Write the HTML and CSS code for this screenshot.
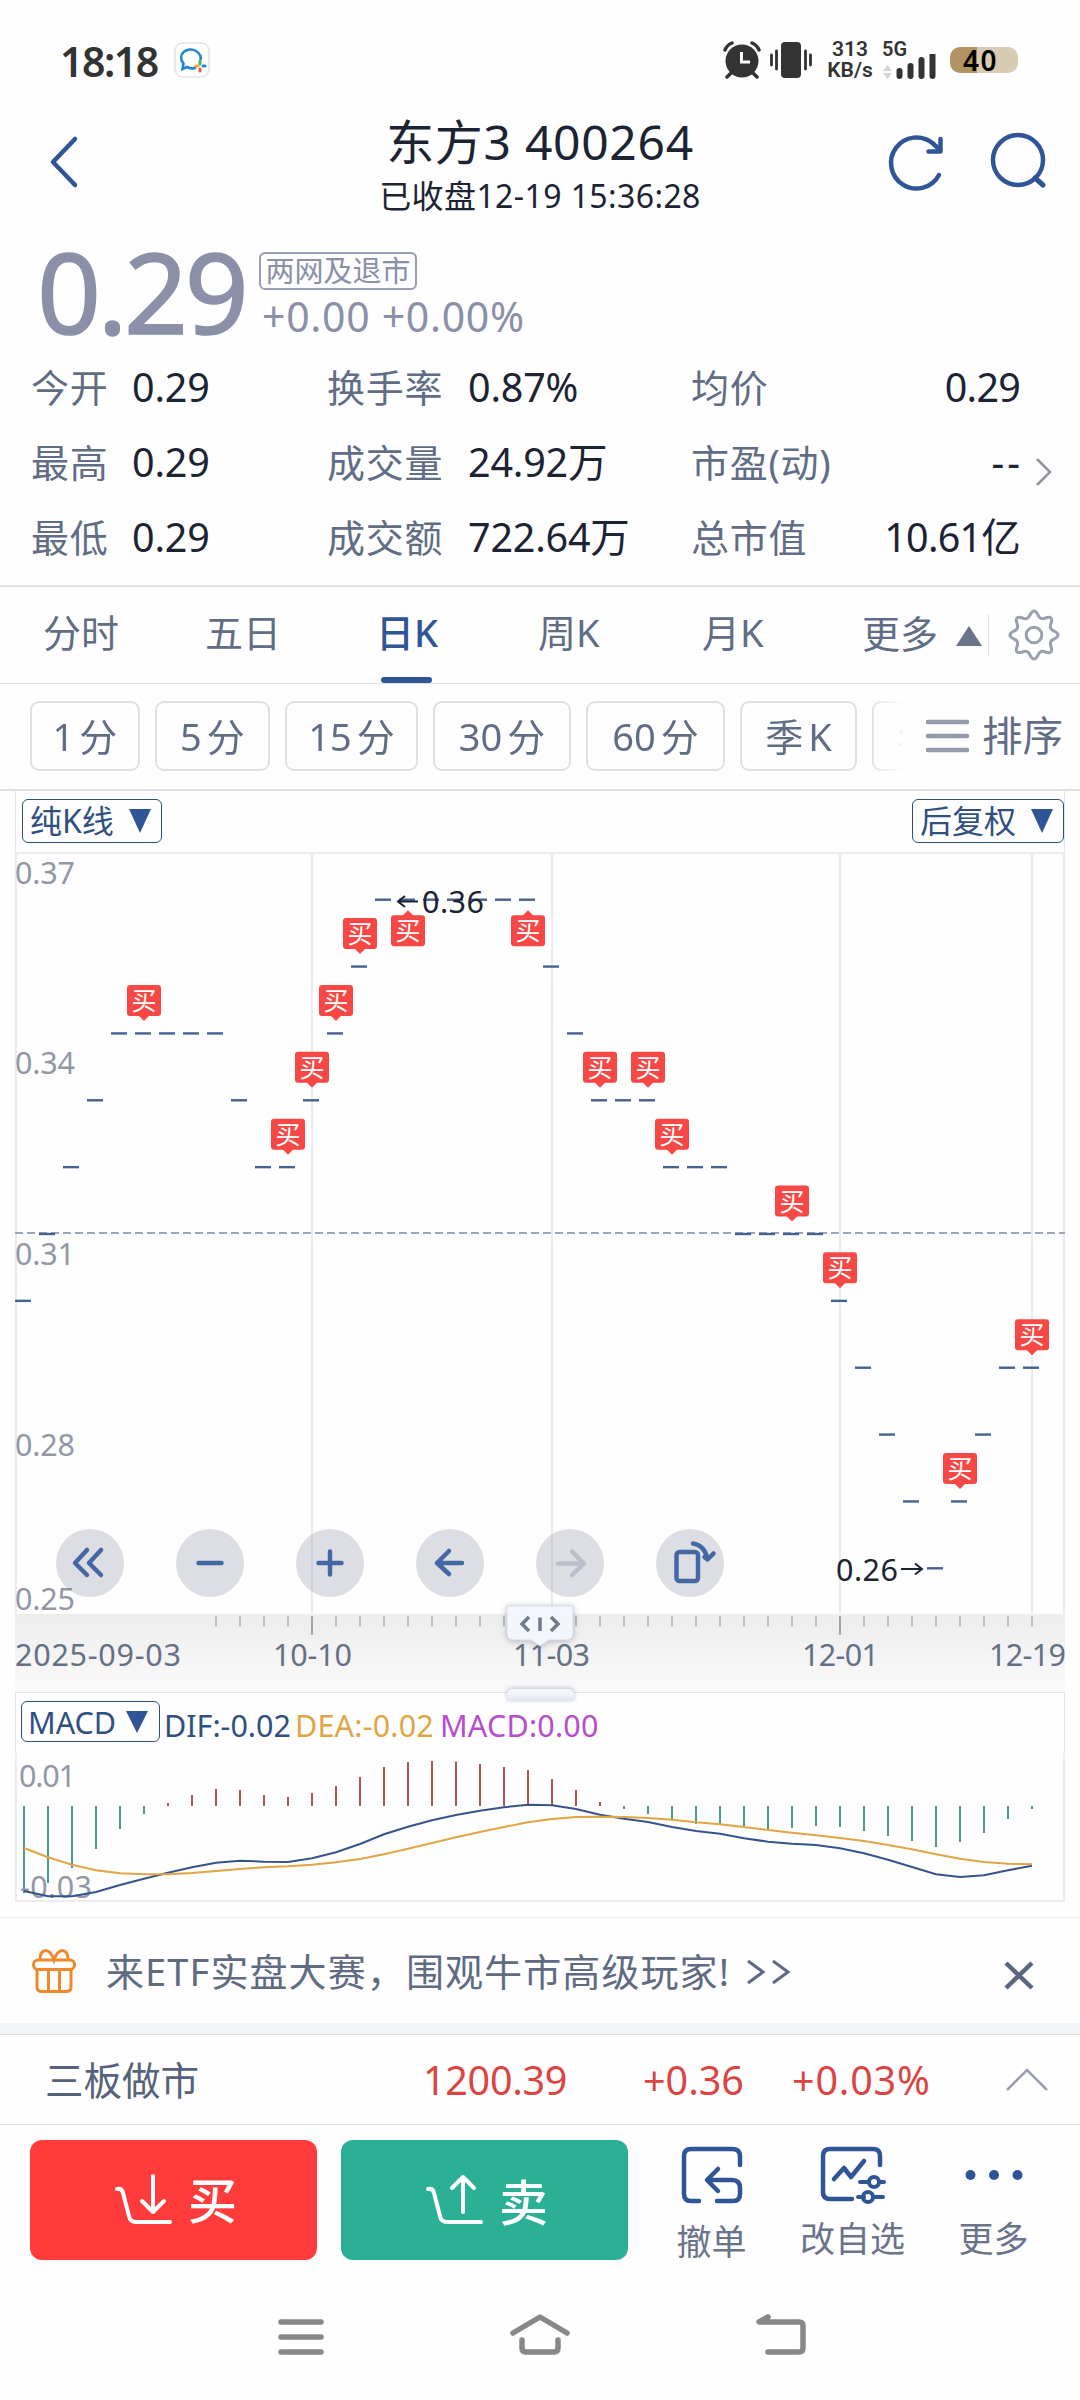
FILE: index.html
```html
<!DOCTYPE html>
<html lang="zh-CN">
<head>
    <meta charset="UTF-8">
    <meta name="viewport" content="width=device-width, initial-scale=1.0">
    <title>东方3 400264</title>
    <link rel="stylesheet" href="styles.css">
</head>
<body>
    <div class="status-bar">
        <span class="clock">18:18</span>
        <svg class="app-icon" width="36" height="36" viewBox="0 0 36 36">
            <rect x="1" y="1" width="34" height="34" rx="8" fill="#fff" stroke="#e3e5e8" stroke-width="1.5"/>
            <path d="M22 25.500 C18 27.500 13 25 13 25 L8.500 27 L9.500 21.500 C2 12 14 4 22 9 Q28 13 26.500 18" fill="none" stroke="#1f86d8" stroke-width="2.600"/>
            <path d="M26 19 v3" stroke="#4ab648" stroke-width="3" stroke-linecap="round"/>
            <path d="M22 24 h2" stroke="#f7a823" stroke-width="3" stroke-linecap="round"/>
            <path d="M29 24 h2" stroke="#1f86d8" stroke-width="3" stroke-linecap="round"/>
            <path d="M26 27 v2" stroke="#ee5b36" stroke-width="3" stroke-linecap="round"/>
        </svg>
        <div class="status-right">
            <svg width="38" height="38" viewBox="0 0 38 38">
                <circle cx="19" cy="20" r="16.500" fill="#333"/>
                <path d="M2 9 Q4 4 9 2 M36 9 Q34 4 29 2 M8 32 L4 36 M30 32 L34 36" fill="none" stroke="#333" stroke-width="3.500" stroke-linecap="round"/>
                <path d="M18.500 11 V21 H27" fill="none" stroke="#fff" stroke-width="3"/>
            </svg>
            <svg class="vibrate" width="44" height="38" viewBox="0 0 44 38">
                <rect x="12" y="1" width="20" height="36" rx="4" fill="#333"/>
                <path d="M2.500 14 V24 M7.500 10 V28 M36.500 10 V28 M41.500 14 V24" stroke="#333" stroke-width="2.800" stroke-linecap="round"/>
            </svg>
            <div class="speed"><span>313</span><span>KB/s</span></div>
            <div class="signal">
                <span>5G</span>
                <svg width="56" height="25" viewBox="0 0 56 25">
                    <path d="M1 17 L5.500 11 L10 17 Z M1 19 L5.500 25 L10 19 Z" fill="#d2d2d2"/>
                    <path d="M17.500 17 V22 M28.500 12 V22 M39.500 6 V22 M50.500 1 V22" stroke="#333" stroke-width="6" stroke-linecap="round"/>
                </svg>
            </div>
            <div class="battery">40</div>
        </div>
    </div>

    <header class="header">
        <svg class="back" width="32" height="54" viewBox="0 0 32 54"><path d="M27 4 L5 27 L27 50" fill="none" stroke="#2f5597" stroke-width="4.500" stroke-linecap="round" stroke-linejoin="round"/></svg>
        <div class="title">
            <h1>东方3 400264</h1>
            <p>已收盘12-19 15:36:28</p>
        </div>
        <div class="header-icons">
            <svg width="60" height="62" viewBox="0 0 60 62">
                <path d="M52 44 A25.500 25.500 0 1 1 46 12.500 L53 19" fill="none" stroke="#2f5597" stroke-width="4.500" stroke-linecap="round"/>
                <path d="M53.500 8 V20.500 H41.500" fill="none" stroke="#2f5597" stroke-width="4.500" stroke-linecap="round" stroke-linejoin="round"/>
            </svg>
            <svg width="60" height="60" viewBox="0 0 60 60">
                <circle cx="29" cy="29" r="25" fill="none" stroke="#2f5597" stroke-width="4.500"/>
                <path d="M46 47 L54 54" stroke="#2f5597" stroke-width="5" stroke-linecap="round"/>
            </svg>
        </div>
    </header>

    <section class="quote">
        <div class="price-row">
            <span class="price">0.29</span>
            <div class="change">
                <span class="badge">两网及退市</span>
                <span class="diff">+0.00 +0.00%</span>
            </div>
        </div>
        <div class="stats">
            <label>今开</label><b>0.29</b><label>换手率</label><b>0.87%</b><label>均价</label><b class="right">0.29</b>
            <label>最高</label><b>0.29</b><label>成交量</label><b>24.92万</b><label>市盈(动)</label><b class="right dash">--</b>
            <label>最低</label><b>0.29</b><label>成交额</label><b>722.64万</b><label>总市值</label><b class="right">10.61亿</b>
        </div>
        <svg class="stats-more" width="20" height="32" viewBox="0 0 20 32"><path d="M3 3 L16 16 L3 29" fill="none" stroke="#8f94a0" stroke-width="2.500"/></svg>
    </section>

    <nav class="tabs">
        <span>分时</span>
        <span>五日</span>
        <span class="active">日K</span>
        <span>周K</span>
        <span>月K</span>
        <span class="more">更多<i class="tri-up"></i></span>
        <svg class="gear" width="52" height="52" viewBox="-26 -26 52 52" fill="none" stroke="#9aa0ae" stroke-width="3">
            <path d="M20.100 -4 Q28 0 20.100 4 Q14.800 6.100 17 11.400 Q19.800 19.800 11.400 17 Q6.100 14.800 4 20.100 Q0 28 -4 20.100 Q-6.100 14.800 -11.400 17 Q-19.800 19.800 -17 11.400 Q-14.800 6.100 -20.100 4 Q-28 0 -20.100 -4 Q-14.800 -6.100 -17 -11.400 Q-19.800 -19.800 -11.400 -17 Q-6.100 -14.800 -4 -20.100 Q0 -28 4 -20.100 Q6.100 -14.800 11.400 -17 Q19.800 -19.800 17 -11.400 Q14.800 -6.100 20.100 -4 Z"/>
            <circle r="7.800"/>
        </svg>
    </nav>

    <div class="periods">
        <div class="pills">
            <span style="width:110px">1<em>分</em></span>
            <span style="width:115px">5<em>分</em></span>
            <span style="width:133px">15<em>分</em></span>
            <span style="width:138px">30<em>分</em></span>
            <span style="width:139px">60<em>分</em></span>
            <span style="width:117px">季<em>K</em></span>
            <span style="width:117px">年<em>K</em></span>
        </div>
        <div class="sort">
            <svg width="43" height="34" viewBox="0 0 43 34"><path d="M2 3 H41 M2 17 H41 M2 31 H41" stroke="#949aa9" stroke-width="4.500" stroke-linecap="round"/></svg>
            <span>排序</span>
        </div>
    </div>

    <div class="chart-head">
        <span class="select">纯K线<i class="tri-down"></i></span>
        <span class="select">后复权<i class="tri-down"></i></span>
    </div>

    <div class="kline">
        <svg id="kline" width="1080" height="840" viewBox="0 852 1080 840"></svg>
        <div class="tools">
            <svg viewBox="0 0 68 68"><path d="M31 21 L19 34 L31 46 M45 21 L33 34 L45 46"/></svg>
            <svg viewBox="0 0 68 68"><path d="M22.500 34 H45.500"/></svg>
            <svg viewBox="0 0 68 68"><path d="M22.500 34 H45.500 M34 22.500 V45.500"/></svg>
            <svg viewBox="0 0 68 68"><path d="M33 22 L21 34 L33 45 M21 34 H46"/></svg>
            <svg class="disabled" viewBox="0 0 68 68"><path d="M36 22.500 L48 34.500 L36 46 M48 34.500 H22"/></svg>
            <svg viewBox="0 0 68 68"><rect x="20.500" y="23" width="21.500" height="29" rx="3"/><path d="M37 14.500 Q48 16 51.500 29.500 M57.500 24.500 L51.500 30.500 L48.500 28"/></svg>
        </div>
        <svg class="handle" width="80" height="50" viewBox="0 0 80 50">
            <path d="M7 3 H73 V30 Q73 37 66 37 H49 L40 43 L31 37 H14 Q7 37 7 30 Z" fill="#f3f6fd" stroke="#d8dce6" stroke-width="1"/>
            <path d="M29 14 L22 21 L29 28 M51 14 L58 21 L51 28 M40 14.500 V28" fill="none" stroke="#717a8d" stroke-width="3.500"/>
        </svg>
        <i class="handle-bottom"></i>
    </div>

    <div class="macd-head">
        <span class="select">MACD<i class="tri-down"></i></span>
        <span class="dif">DIF:-0.02</span>
        <span class="dea">DEA:-0.02</span>
        <span class="macd">MACD:0.00</span>
    </div>
    <svg id="macd" class="macd-chart" width="1080" height="165" viewBox="0 1752 1080 165"></svg>

    <div class="promo">
        <svg width="46" height="46" viewBox="0 0 46 46" fill="none" stroke="#ee8a2c" stroke-width="3">
            <rect x="2.500" y="12" width="41" height="9.500" rx="4.500"/>
            <path d="M6 22 V39 Q6 43.500 11 43.500 H35 Q40 43.500 40 39 V22 M17.500 22 V43 M28.500 22 V43 M9 12 Q9 2.500 15 2.500 Q20 3 23 12 Q26 3 31 2.500 Q37 2.500 37 12"/>
        </svg>
        <span class="promo-text">来ETF实盘大赛，围观牛市高级玩家!</span>
        <svg class="arrows" width="48" height="30" viewBox="0 0 48 30"><path d="M3 3 L18 14 L3 25 M28 3 L43 14 L28 25" fill="none" stroke="#606b82" stroke-width="3"/></svg>
        <svg class="close" width="32" height="32" viewBox="0 0 32 32"><path d="M3 4 L29 29 M29 4 L3 29" stroke="#5a667f" stroke-width="4.500"/></svg>
    </div>

    <div class="index-row">
        <span class="index-name">三板做市</span>
        <span class="up value">1200.39</span>
        <span class="up delta">+0.36</span>
        <span class="up pct">+0.03%</span>
        <svg width="46" height="26" viewBox="0 0 46 26"><path d="M3 23 L23 3 L43 23" fill="none" stroke="#9a9fb0" stroke-width="2.500"/></svg>
    </div>

    <footer class="trade">
        <button class="buy">
            <svg width="60" height="56" viewBox="0 0 60 56" fill="none" stroke="#fff" stroke-width="4" stroke-linecap="round" stroke-linejoin="round"><path d="M3 17 Q8 16 9 21 L15 44 Q16 50 22 50 H56 M39 4 V39 M28 29 L39 40 L50 29"/></svg>
            <span>买</span>
        </button>
        <button class="sell">
            <svg width="60" height="56" viewBox="0 0 60 56" fill="none" stroke="#fff" stroke-width="4" stroke-linecap="round" stroke-linejoin="round"><path d="M3 17 Q8 16 9 21 L15 44 Q16 50 22 50 H56 M38 40 V6 M27 16 L38 5 L49 16"/></svg>
            <span>卖</span>
        </button>
        <div class="action cancel">
            <svg width="64" height="60" viewBox="0 0 64 60" fill="none" stroke="#2f5597" stroke-width="4.500" stroke-linecap="round" stroke-linejoin="round"><path d="M19 56 H11 Q4 56 4 49 V11 Q4 4 11 4 H52 Q60 4 60 11 V20 M37 56 H53 Q60 56 60 49 V43 Q60 35 52 35 H28 M38 24 L27 35 L38 46"/></svg>
            <span>撤单</span>
        </div>
        <div class="action">
            <svg width="68" height="60" viewBox="0 0 68 60" fill="none" stroke="#2f5597" stroke-width="4.500" stroke-linecap="round" stroke-linejoin="round"><path d="M33 54 H11 Q4 54 4 47 V11 Q4 4 11 4 H54 Q61 4 61 11 V20 M15 34 L25 23 L32 32 L45 16"/><path d="M41 37 H50 M60 37 H65 M39 52 H45 M55 52 H64" stroke-width="4"/><circle cx="55" cy="37" r="5" stroke-width="4"/><circle cx="49" cy="52" r="5" stroke-width="4"/></svg>
            <span>改自选</span>
        </div>
        <div class="action">
            <svg width="64" height="60" viewBox="0 0 64 60" fill="#2f5597"><circle cx="8.500" cy="30" r="5"/><circle cx="32" cy="30" r="5"/><circle cx="55.500" cy="30" r="5"/></svg>
            <span>更多</span>
        </div>
    </footer>

    <div class="nav-bar">
        <svg width="50" height="44" viewBox="0 0 50 44"><path d="M5 10 H45 M5 25 H45 M5 40 H45" /></svg>
        <svg width="64" height="44" viewBox="0 0 64 44"><path d="M5 21 L32 5 L59 21 M14 28 V36 Q14 40 18 40 H46 Q50 40 50 36 V28"/></svg>
        <svg width="54" height="44" viewBox="0 0 54 44"><path d="M14 5 L5 10 H45 Q49 10 49 14 V36 Q49 40 45 40 H14"/></svg>
    </div>

    <script>
    // price level per day, 0 = top (0.36), one step = 0.01
    const levels = [6,5,4,3,2,2,2,2,2,3,4,4,3,2,1,0,0,0,0,0,0,0,1,2,3,3,3,4,4,4,5,5,5,5,6,7,8,9,10,9,8,7,7];
    const buyAbove = [5,11,12,13,14,24,26,27,32,34,39,42];
    const buyBelow = [16,21];
    const dayX = i => 24 + i * 24;
    const levelY = k => 899.7 + k * 66.86;

    let s = `<defs><linearGradient id="axis" x1="0" y1="0" x2="0" y2="1"><stop offset="0" stop-color="#ededee"/><stop offset="1" stop-color="#fafafa"/></linearGradient></defs>`;
    s += `<path class="frame" d="M15 853 H1065 M16 853 V1614 M1064 853 V1614 M312 853 V1613 M552 853 V1613 M840 853 V1613 M1032 853 V1613"/>`;
    s += `<rect x="15" y="1614" width="1050" height="78" fill="url(#axis)"/>`;
    for (let i = 8; i < 43; i++) {
        const major = i == 12 || i == 22 || i == 34;
        s += `<path class="${major ? 'tick major' : 'tick'}" d="M${dayX(i)} 1616 V${major ? 1635 : 1626}"/>`;
    }
    [['0.37', 884], ['0.34', 1074], ['0.31', 1265], ['0.28', 1456], ['0.25', 1610]].forEach(([t, y]) => {
        s += `<text class="scale" x="15" y="${y}" textLength="60">${t}</text>`;
    });
    [['2025-09-03', 15, 166], ['10-10', 273, 79], ['11-03', 513, 77], ['12-01', 802, 77], ['12-19', 989, 77]].forEach(([t, x, w]) => {
        s += `<text class="date" x="${x}" y="1666" textLength="${w}">${t}</text>`;
    });
    s += `<path class="ref-line" d="M15 1233 H1065"/>`;
    levels.forEach((k, i) => {
        s += `<path class="candle" d="M${dayX(i) - 9} ${levelY(k)} h16"/>`;
    });
    function marker(i, below) {
        const x = dayX(i), y = levelY(levels[i]);
        const top = below ? y + 15.500 : y - 48.500;
        const tip = below ? `M${x - 6} ${top + 1} l6 -6 l6 6 Z` : `M${x - 6} ${top + 30} l6 6 l6 -6 Z`;
        s += `<rect class="mark" x="${x - 17}" y="${top}" width="34" height="31" rx="3"/><path class="mark" d="${tip}"/>`;
        s += `<text class="mark-text" x="${x}" y="${top + 25}">买</text>`;
    }
    buyAbove.forEach(i => marker(i, false));
    buyBelow.forEach(i => marker(i, true));
    s += `<path class="arrow" d="M418 901.500 H398 M405 896 L398 901.500 L405 907"/><text class="peak" x="422" y="913" textLength="62">0.36</text>`;
    s += `<path class="arrow" d="M901 1569 H922 M915 1563.500 L922 1569 L915 1574.500"/><text class="peak" x="836" y="1581" textLength="62">0.26</text>`;
    document.getElementById('kline').innerHTML = s;

    // MACD panel, y positions of bar ends and of both lines
    const bars = [1893,1883,1868,1849,1829,1814,1803,1795,1789,1790,1795,1797,1793,1786,1777,1767,1762,1761,1761.5,1764,1767,1770,1779,1790,1802,1809,1814,1820,1824,1824,1826,1829,1828,1826,1827,1831,1836,1841,1847,1842,1833,1819,1809];
    const dif = [633,649,649,636,615,596,578,562,548,542,545,546,535,517,492,463,440,421,405,392,382,374,376,387,404,416,426,441,453,461,475,485,491,495,505,520,539,561,583,591,586,571,557];
    const dea = [504,532,554,571,580,583,583,579,573,567,562,559,554,547,537,523,506,489,472,456,441,427,417,411,410,411,414,419,427,433,441,450,458,466,474,483,495,508,523,536,546,551,553];
    const line = arr => arr.map((v, i) => `${dayX(i)},${(1680 + v / 3).toFixed(1)}`).join(' ');
    let m = `<path class="frame" d="M16 1753 V1901 H1064 V1753"/>`;
    bars.forEach((y, i) => {
        m += `<path class="${y < 1806 ? 'bar-up' : 'bar-down'}" d="M${dayX(i)} 1806 V${y}"/>`;
    });
    m += `<text class="scale" x="19" y="1787" textLength="57">0.01</text><text class="scale" x="20" y="1898" textLength="72">-0.03</text>`;
    m += `<polyline class="line-dif" points="${line(dif)}"/><polyline class="line-dea" points="${line(dea)}"/>`;
    document.getElementById('macd').innerHTML = m;
    </script>
</body>
</html>
```
FILE: styles.css
```css
* {
    box-sizing: border-box;
}
body {
    margin: 0;
    width: 1080px;
    height: 2400px;
    overflow: hidden;
    background: #fefefe;
    color: #1c2333;
    font-family: "Noto Sans", "Noto Sans CJK SC", sans-serif;
}
svg {
    display: block;
    flex-shrink: 0;
}

/* status bar */
.status-bar {
    display: flex;
    align-items: center;
    height: 120px;
    padding: 0 62px 0 60px;
    color: #333;
}
.clock {
    width: 114px;
    padding-top: 2px;
    font-size: 41px;
    font-weight: 600;
    line-height: 60px;
    letter-spacing: -1.5px;
}
.status-right {
    display: flex;
    align-items: center;
    margin-left: auto;
}
.vibrate {
    margin-left: 8px;
}
.speed {
    display: flex;
    flex-direction: column;
    align-items: center;
    width: 62px;
    margin-left: 6px;
    margin-right: -1px;
    font-family: Roboto, sans-serif;
    font-size: 21px;
    font-weight: 600;
    line-height: 21px;
}
.signal {
    width: 56px;
    margin-left: 2px;
    margin-right: 12px;
    font-family: Roboto, sans-serif;
    font-size: 20px;
    font-weight: 600;
    line-height: 16px;
}
.signal span {
    display: block;
    height: 13px;
}
.battery {
    width: 68px;
    height: 26px;
    border-radius: 10px;
    background: linear-gradient(90deg, #b29464 40%, #d8cbb3 40%);
    color: #000;
    font-size: 28px;
    font-weight: 600;
    line-height: 27px;
    padding-left: 13px;
    letter-spacing: 1.5px;
}

/* header */
.header {
    display: flex;
    height: 125px;
    padding: 0 31px 0 48px;
}
.back {
    margin-top: 15px;
}
.title {
    flex: 1;
    padding-left: 113px;
    text-align: center;
    white-space: nowrap;
}
.title h1 {
    margin: -7px 0 0;
    font-size: 48px;
    font-weight: 400;
    line-height: 58px;
    letter-spacing: 0.7px;
}
.title p {
    margin: 5px 0 0;
    font-size: 32px;
    line-height: 40px;
    letter-spacing: 0.4px;
}
.header-icons {
    display: flex;
    gap: 42px;
    margin-top: 11px;
}

/* quote */
.quote {
    position: relative;
    height: 342px;
    border-bottom: 2px solid #e1e2e4;
}
.price-row {
    display: flex;
    height: 105px;
    padding-left: 37px;
    color: #8b90a8;
}
.price {
    width: 222px;
    font-size: 112px;
    font-weight: 400;
    line-height: 92px;
    letter-spacing: -3.5px;
    -webkit-text-stroke: 1.5px #8b90a8;
}
.change {
    display: flex;
    flex-direction: column;
    align-items: flex-start;
    padding-top: 7px;
}
.badge {
    width: 158px;
    height: 38px;
    border: 2px solid #9a9eb2;
    border-radius: 6px;
    font-size: 29px;
    line-height: 34px;
    text-align: center;
    white-space: nowrap;
}
.diff {
    margin-top: 6px;
    padding-left: 3px;
    font-size: 41px;
    line-height: 40px;
    letter-spacing: 0.7px;
    white-space: nowrap;
}
.stats {
    display: grid;
    grid-template-columns: 101px 195px 141px 223px 181px 148px;
    grid-auto-rows: 75px;
    align-items: baseline;
    padding-left: 31px;
    line-height: 75px;
    white-space: nowrap;
}
.stats label {
    color: #616c85;
    font-size: 38px;
    letter-spacing: 0.7px;
}
.stats b {
    font-size: 39.5px;
    font-weight: 400;
    letter-spacing: -0.2px;
}
.stats .right {
    text-align: right;
    letter-spacing: -0.8px;
}
.stats .dash {
    letter-spacing: 3px;
    margin-right: -3px;
}
.stats-more {
    position: absolute;
    left: 1034px;
    top: 211px;
}

/* tabs */
.tabs {
    display: flex;
    align-items: center;
    height: 97px;
    border-bottom: 1px solid #dfe0e2;
    color: #616c85;
    font-size: 38px;
    line-height: 91px;
    padding-left: 43px;
    white-space: nowrap;
}
.tabs span {
    width: 162px;
    height: 96px;
}
.tabs span:nth-child(2) {
    width: 171px;
}
.tabs span:nth-child(3) {
    width: 162px;
}
.tabs span:nth-child(4) {
    width: 164px;
}
.tabs span:nth-child(5) {
    width: 160px;
}
.tabs .active {
    position: relative;
    color: #2f5597;
    font-weight: 500;
}
.tabs .active::after {
    content: "";
    position: absolute;
    left: 5px;
    bottom: 0;
    width: 51px;
    height: 6px;
    border-radius: 3px;
    background: #2f5597;
}
.tabs .more {
    display: flex;
    align-items: center;
    width: 127px;
    height: 42px;
    line-height: 38px;
    padding-bottom: 4px;
    border-right: 1px solid #dfe0e4;
}
.tri-up {
    margin-left: 18px;
    margin-top: 5px;
    border: 13px solid transparent;
    border-top: 0;
    border-bottom: 20px solid #6a748b;
}
.gear {
    margin-left: 19px;
}

/* period pills */
.periods {
    display: flex;
    align-items: center;
    height: 107px;
    border-bottom: 2px solid #dfe0e2;
    padding-bottom: 1px;
    color: #616c85;
}
.pills {
    display: flex;
    gap: 15px;
    width: 908px;
    padding-left: 30px;
    overflow: hidden;
    -webkit-mask-image: linear-gradient(90deg, #000 868px, transparent 904px);
    mask-image: linear-gradient(90deg, #000 868px, transparent 904px);
}
.pills span {
    flex-shrink: 0;
    height: 70px;
    border: 2px solid #dfe0e2;
    border-radius: 9px;
    font-size: 38px;
    line-height: 66px;
    text-align: center;
}
.pills em {
    margin-left: 5px;
    font-style: normal;
}
.sort {
    display: flex;
    align-items: center;
    gap: 13px;
    padding-left: 18px;
    font-size: 40.5px;
    line-height: 66px;
}

/* chart selects */
.chart-head {
    display: flex;
    justify-content: space-between;
    height: 61px;
    margin: 0 15px;
    padding: 8px 0 0 6px;
    border: 1px solid #e4e5e8;
    border-top: 0;
    border-bottom: 0;
}
.select {
    display: flex;
    align-items: center;
    height: 44px;
    padding: 0 10px 0 7px;
    border: 1.5px solid #2f4f80;
    border-radius: 6px;
    color: #2f5080;
    font-size: 32px;
    line-height: 42px;
    white-space: nowrap;
}
.tri-down {
    margin-left: 15px;
    border: 11.5px solid transparent;
    border-bottom: 0;
    border-top: 24px solid #2f5597;
}

/* k-line chart */
.kline {
    position: relative;
    height: 840px;
}
.frame {
    fill: none;
    stroke: #ececee;
    stroke-width: 2;
}
.tick {
    stroke: #bdc1ca;
    stroke-width: 2;
}
.tick.major {
    stroke: #a0a5b2;
}
text {
    font-size: 30.5px;
}
.scale {
    fill: #9297a5;
}
.date {
    fill: #667085;
}
.ref-line {
    stroke: #9ba5bb;
    stroke-width: 2;
    stroke-dasharray: 8 4;
}
.candle {
    stroke: #44618f;
    stroke-width: 2.4;
}
.mark {
    fill: #f84845;
}
.mark-text {
    fill: #fff;
    font-size: 25px;
    text-anchor: middle;
}
.arrow {
    fill: none;
    stroke: #1c2333;
    stroke-width: 2;
}
.peak {
    fill: #1c2333;
}
.tools {
    position: absolute;
    left: 56px;
    top: 677px;
    display: flex;
    gap: 52px;
}
.tools svg {
    width: 68px;
    height: 68px;
    border-radius: 50%;
    background: rgba(92, 97, 122, 0.2);
    fill: none;
    stroke: #4567a4;
    stroke-width: 4.5;
    stroke-linecap: round;
    stroke-linejoin: round;
}
.tools .disabled {
    stroke: #bcbecc;
}
.handle {
    position: absolute;
    left: 500px;
    top: 751px;
    filter: drop-shadow(0 1px 3px rgba(60, 70, 100, 0.35));
}
.handle-bottom {
    position: absolute;
    left: 507px;
    top: 837px;
    z-index: 1;
    width: 67px;
    height: 12px;
    border-radius: 6px 6px 0 0;
    background: linear-gradient(#f3f6fd 40%, #dfe3ec);
    box-shadow: 0 -1px 4px rgba(60, 70, 100, 0.35);
}

/* macd */
.macd-head {
    display: flex;
    height: 60px;
    margin: 0 15px;
    padding: 9px 0 0 5px;
    border: 1px solid #e1e2e5;
    border-bottom: 0;
    font-size: 30.5px;
    line-height: 47px;
    white-space: nowrap;
}
.macd-head .select {
    width: 139px;
    height: 41px;
    margin-top: -1px;
    margin-right: 4px;
    padding-left: 6px;
    font-size: 30.5px;
}
.macd-head .tri-down {
    margin-left: 10px;
    border-top-width: 22px;
    border-left-width: 11px;
    border-right-width: 11px;
}
.dif {
    width: 131px;
    color: #2f5080;
}
.dea {
    width: 145px;
    color: #e0a545;
    letter-spacing: 0.2px;
}
.macd {
    color: #b84ccc;
    letter-spacing: 0.2px;
}
.bar-up {
    stroke: #b05553;
    stroke-width: 2;
}
.bar-down {
    stroke: #4d9a8e;
    stroke-width: 2;
}
.line-dif, .line-dea {
    fill: none;
    stroke: #37548a;
    stroke-width: 2;
}
.line-dea {
    stroke: #e0a545;
}

/* promo banner */
.promo {
    display: flex;
    align-items: center;
    height: 117px;
    padding: 0 45px 0 31px;
    border-top: 1px solid #f1f1f3;
    border-bottom: 11px solid #f4f5f7;
    color: #606b82;
    font-size: 38px;
    letter-spacing: 1.1px;
    line-height: 60px;
    white-space: nowrap;
}
.promo-text {
    width: 639px;
    margin-left: 29px;
}
.arrows {
    margin-top: 4px;
}
.close {
    margin-left: auto;
    margin-top: 8px;
}

/* index row */
.index-row {
    display: flex;
    align-items: center;
    height: 91px;
    padding-left: 45px;
    border-top: 1px solid #d9dadd;
    border-bottom: 1px solid #dfe0e2;
    font-size: 39.5px;
    line-height: 90px;
    white-space: nowrap;
}
.index-name {
    width: 378px;
    color: #56627b;
    font-size: 38.5px;
}
.up {
    color: #dc4444;
}
.value {
    width: 220px;
    letter-spacing: -0.3px;
}
.delta {
    width: 149px;
}
.pct {
    width: 212px;
    letter-spacing: 0.8px;
}

/* trade bar */
.trade {
    display: flex;
    height: 166px;
    padding: 15px 0 0 30px;
}
.trade button {
    display: flex;
    align-items: center;
    width: 287px;
    height: 120px;
    margin: 0 24px 0 0;
    padding: 0 0 0 84px;
    border: none;
    border-radius: 12px;
    background: #ff3c3b;
    color: #fff;
    font-family: inherit;
    font-size: 49px;
    line-height: 70px;
    font-weight: 500;
}
.trade button span {
    margin-left: 14px;
}
.trade .sell span {
    padding-top: 4px;
}
.trade .sell {
    background: #2cb095;
}
.action {
    display: flex;
    flex-direction: column;
    align-items: center;
    width: 141px;
    padding-top: 5px;
    color: #69738a;
    font-size: 35px;
    line-height: 44px;
    white-space: nowrap;
}
.action span {
    margin-top: 12px;
}
.action.cancel {
    width: 141px;
    margin-left: -11px;
}
.action.cancel span {
    margin-top: 15px;
}

/* system navigation */
.nav-bar {
    display: flex;
    justify-content: center;
    gap: 182px;
    margin-top: 21px;
    padding-left: 3px;
    fill: none;
    stroke: #888;
    stroke-width: 5.5;
    stroke-linecap: round;
    stroke-linejoin: round;
}
```
